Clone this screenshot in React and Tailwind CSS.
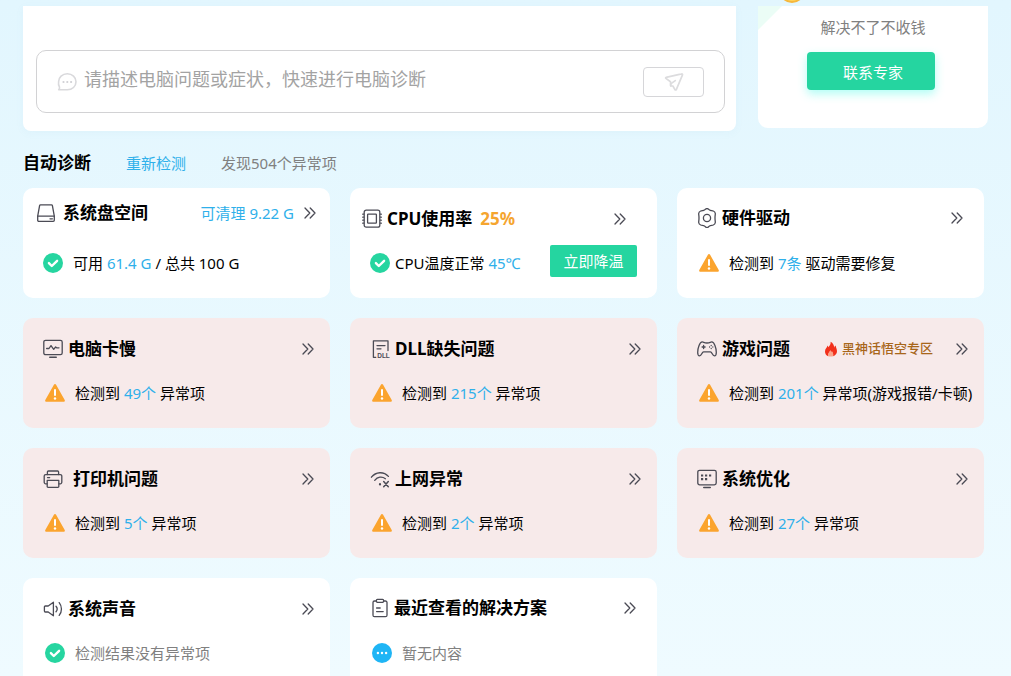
import React from "react";

const line = {
  fill: "none",
  stroke: "#4b4b55",
  strokeWidth: 1.3,
  strokeLinecap: "round",
  strokeLinejoin: "round",
  "aria-hidden": true,
};

const DiskIcon = () => (
  <svg {...line} width="18" height="18" viewBox="0 0 18 18">
    <path d="M3.6.8h10.8a1 1 0 0 1 1 .8l1.9 10.6v4a1.1 1.1 0 0 1-1.1 1.1H1.8a1.1 1.1 0 0 1-1.1-1.1v-4L2.6 1.6a1 1 0 0 1 1-.8z" />
    <path d="M.8 12.2h16.4M13 14.8h2.4" />
  </svg>
);

const CpuIcon = () => (
  <svg {...line} width="20" height="20" viewBox="0 0 20 20">
    <rect x="2.2" y="1.2" width="15.6" height="17" rx="2" />
    <rect x="5.6" y="5.2" width="8.8" height="9" rx=".6" />
    <path d="M.7 5.2h1M.7 8.2h1M.7 11.2h1M.7 14.2h1M18.4 5.2h1M18.4 8.2h1M18.4 11.2h1M18.4 14.2h1" />
  </svg>
);

const DriverIcon = () => (
  <svg {...line} width="20" height="20" viewBox="0 0 20 20">
    <path d="M8.800.9a2.200 2.200 0 0 1 2.400 0c.7.600 1.200 1.200 2.200 1.500s1.900.2 2.900.6c1.300.5 1.900 1.200 2 2.500.1 1-.3 1.800-.3 4.500s.4 3.500.3 4.500c-.1 1.300-.7 2-2 2.500-1 .4-1.900.3-2.900.6s-1.500.9-2.200 1.500a2.200 2.200 0 0 1-2.400 0c-.7-.6-1.200-1.200-2.200-1.500s-1.900-.2-2.900-.6c-1.300-.5-1.900-1.200-2-2.500-.1-1 .3-1.800.3-4.500s-.4-3.500-.3-4.500c.1-1.300.7-2 2-2.500 1-.4 1.900-.3 2.900-.6s1.500-.9 2.200-1.500z" />
    <circle cx="10" cy="10" r="3.600" />
  </svg>
);

const MonitorIcon = () => (
  <svg {...line} width="20" height="20" viewBox="0 0 20 20">
    <rect x=".8" y="1.300" width="18.400" height="14.400" rx="1.800" />
    <path d="M3.600 9.500H6l2-2.900L10.700 10.300l1.900-2.300 1 .8H16" />
    <path d="M6.800 18.300h6.400" strokeWidth="1.600" />
  </svg>
);

const DllIcon = () => (
  <svg {...line} width="18" height="20" viewBox="0 0 18 20">
    <path d="M3.800 18.300H1.400V1.800H16v9.800M5 6.600h8M5 9.800h4" />
    <text
      x="5.200"
      y="18.900"
      fontFamily="Liberation Sans, sans-serif"
      fontSize="6.500"
      fontWeight="700"
      fill="#4b4b55"
      stroke="none"
    >
      DLL
    </text>
  </svg>
);

const GamepadIcon = () => (
  <svg {...line} width="20" height="20" viewBox="0 0 20 20">
    <path d="M5.200 2.900c1.500 0 1.800 1.100 4.800 1.100s3.300-1.100 4.800-1.100c2.400 0 4.500 6.200 4.500 10.500 0 2-.7 3.400-1.900 3.400-2.200 0-2.100-4-4-4H6.600c-1.900 0-1.800 4-4 4-1.200 0-1.900-1.400-1.900-3.400C.7 9.100 2.800 2.900 5.200 2.900z" />
    <path d="M6.600 6.500v3M5.100 8h3M14.200 6.400v.1M14.200 9.500v.1M12.600 8v.1M15.800 8v.1" />
  </svg>
);

const PrinterIcon = () => (
  <svg {...line} width="20" height="20" viewBox="0 0 20 20">
    <path d="M4.400 5.600V3a1 1 0 0 1 1-1h9.200a1 1 0 0 1 1 1v2.600" />
    <path d="M4.200 14.800H2.700a1.500 1.500 0 0 1-1.500-1.500V7.100a1.500 1.500 0 0 1 1.500-1.500h14.600a1.500 1.500 0 0 1 1.500 1.500v6.200a1.500 1.500 0 0 1-1.500 1.500h-1.500" />
    <path d="M4.200 11.400h11.600v6.100a.8.800 0 0 1-.8.800H5a.8.800 0 0 1-.8-.8zM4.500 8.600h2.200" />
  </svg>
);

const WifiOffIcon = () => (
  <svg {...line} width="20" height="20" viewBox="0 0 20 20">
    <path d="M1.400 8.200c4.500-5.600 12.300-6 17-.8M4.700 11.300c2.800-3.500 7.300-4.200 10.700-1.600" />
    <path d="M10 15.200v.2" strokeWidth="2.200" />
    <path d="M13.700 12.500l4.600 5.200M18.300 12.500l-4.600 5.200" strokeWidth="1.500" />
  </svg>
);

const OptimizeIcon = () => (
  <svg {...line} width="20" height="20" viewBox="0 0 20 20">
    <rect x=".8" y="1.300" width="18.400" height="14.600" rx="1.800" />
    <path d="M4 6.500h2.200M8 6.500h2.200M12 6.500h2.200M4 10.200h2.200M8 10.200h2.200" strokeWidth="2.200" strokeLinecap="butt" />
    <path d="M6.800 18.500h6.400" strokeWidth="1.600" />
  </svg>
);

const SoundIcon = () => (
  <svg {...line} width="20" height="20" viewBox="0 0 20 20">
    <path d="M10.400 3.200v13.600L5.200 13H2.300a.9.900 0 0 1-.9-.9V7.900a.9.900 0 0 1 .9-.9h2.900z" />
    <path d="M13 7.200c1.400 1.600 1.400 4 0 5.600M16.200 3.600c3 3.700 3 9.100 0 12.800" />
  </svg>
);

const ClipboardIcon = () => (
  <svg {...line} width="18" height="20" viewBox="0 0 18 20">
    <path d="M5.300 3H3.500A1.500 1.500 0 0 0 2 4.500v12.700a1.500 1.500 0 0 0 1.500 1.500h11a1.500 1.500 0 0 0 1.500-1.500V4.500A1.500 1.500 0 0 0 14.500 3h-1.800" />
    <path d="M6.400 1.300h5.200a1 1 0 0 1 1 1v.8a1.300 1.300 0 0 1-1.300 1.300H6.700a1.300 1.300 0 0 1-1.300-1.300v-.8a1 1 0 0 1 1-1zM5.600 10h3.600M5.600 13.600h6.600" />
  </svg>
);

const ChevronsIcon = () => (
  <svg {...line} width="12" height="12" viewBox="0 0 12 12">
    <path d="M1 1l4.800 5L1 11M6.200 1L11 6l-4.800 5" />
  </svg>
);

const FlameIcon = () => (
  <svg width="14" height="16" viewBox="0 0 14 16" aria-hidden="true">
    <path d="M6.600.8c.4 2.400-.8 3.700-2.300 5.400-.2-.7-.4-1.200-.8-1.600C3.200 6.600 1 7.800 1 10.400c0 2.300 1.200 4 3.200 4.800-.9-2.400.9-3.700 2.300-5.900.5 1.500 1.200 1.900 1.600 1.300.9 1.400 1.500 3.100 1 4.600 2.300-.7 3.900-2.500 3.900-4.900 0-2.200-1.200-3.500-1.300-5.700-.9.500-1.300 1.100-1.500 2.100C10 4 9 2 6.600.8z" fill="#f2301b" />
    <path d="M4.200 15.200c-.9-2.400.9-3.700 2.300-5.900.5 1.500 1.200 1.900 1.600 1.300.9 1.400 1.500 3.100 1 4.600-1.500.4-3.400.4-4.900 0z" fill="#ff6a3a" opacity=".55" />
  </svg>
);

const OkIcon = () => (
  <svg className="shrink-0" width="20" height="20" viewBox="0 0 20 20" aria-hidden="true">
    <circle cx="10" cy="10" r="10" fill="#26d5a0" />
    <path d="M5.900 10.100l2.900 2.900 5.300-5.200" fill="none" stroke="#fff" strokeWidth="2.400" strokeLinecap="round" strokeLinejoin="round" />
  </svg>
);

const WarnIcon = () => (
  <svg className="shrink-0" width="20" height="20" viewBox="0 0 20 20" aria-hidden="true">
    <path d="M8.900 1.700a1.300 1.300 0 0 1 2.200 0l8.600 15.200a1.200 1.200 0 0 1-1.100 1.800H1.400a1.200 1.200 0 0 1-1.100-1.800z" fill="#fba42e" />
    <path d="M10 7v5" stroke="#fff" strokeWidth="2" strokeLinecap="round" />
    <circle cx="10" cy="15.500" r="1.200" fill="#fff" />
  </svg>
);

const MoreIcon = () => (
  <svg className="shrink-0" width="20" height="20" viewBox="0 0 20 20" aria-hidden="true">
    <circle cx="10" cy="10" r="10" fill="#1fb5f5" />
    <g fill="#fff">
      <circle cx="5.900" cy="10" r="1.200" />
      <circle cx="10" cy="10" r="1.200" />
      <circle cx="14.100" cy="10" r="1.200" />
    </g>
  </svg>
);

const ChatIcon = () => (
  <svg width="20" height="20" viewBox="0 0 20 20" fill="none" stroke="#d9d9dc" strokeWidth="1.600" strokeLinejoin="round" aria-hidden="true">
    <path d="M10.300 1.800c5 0 8.700 3.500 8.700 8s-3.700 8-8.700 8H1.700c.8-.8 1-1.600.8-2.600A7.800 7.800 0 0 1 1.600 9.800c0-4.500 3.700-8 8.700-8z" />
    <g fill="#d0d0d4" stroke="none">
      <circle cx="6.500" cy="10" r="1.100" />
      <circle cx="10.300" cy="10" r="1.100" />
      <circle cx="14.100" cy="10" r="1.100" />
    </g>
  </svg>
);

const SendIcon = () => (
  <svg width="20" height="20" viewBox="0 0 20 20" fill="none" stroke="#dcdcde" strokeWidth="1.700" strokeLinecap="round" strokeLinejoin="round" aria-hidden="true">
    <path d="M17.600 1.900L2.100 5.300a.6.600 0 0 0-.2 1.100l4.600 3.400.2 4 2.200.2 2 3.600a.8.800 0 0 0 1.400 0l6.200-14.800a.7.700 0 0 0-.9-.9z" />
    <path d="M6.700 13.800v-1.900l4.600-3.300" />
  </svg>
);

const Hl = ({ children }) => <span className="text-[#2fb0ea]">{children}</span>;

function Card({ pink, headClass = "pl-5 pr-4 pt-[19px]", bodyClass = "pl-[22px] gap-[10px]", gap = "gap-[5px]", icon, title, extra, status, children, action }) {
  return (
    <article className={`flex h-[110px] min-w-0 flex-col rounded-[10px] pb-[17px] ${pink ? "bg-[#f7eaea]" : "bg-white"}`}>
      <header className={`flex items-center ${headClass}`}>
        <div className={`flex h-6 items-center ${gap}`}>
          {icon}
          <h3 className="whitespace-nowrap text-[17px] font-bold leading-6 text-black">{title}</h3>
        </div>
        <div className="flex grow items-center">{extra}</div>
        <button type="button" aria-label={`${title} 详情`} className="shrink-0">
          <ChevronsIcon />
        </button>
      </header>
      <div className={`mt-auto flex h-9 items-center ${bodyClass}`}>
        {status}
        <p className="whitespace-nowrap text-[15px] leading-6">{children}</p>
        {action}
      </div>
    </article>
  );
}

export default function App() {
  return (
    <div className="flex h-screen flex-col overflow-hidden bg-linear-to-b from-[#e2f6fe] to-[#effbff] px-[23px] pt-[6px] font-['Noto_Sans','Noto_Sans_CJK_SC',sans-serif] text-black">
      <div className="flex shrink-0 items-start gap-[22px]">
        <section className="min-w-0 grow rounded-b-lg bg-white px-[13px] pb-[18px] pt-11 shadow-[0_2px_8px_rgba(90,160,200,0.05)]">
          <form className="mr-[-2px] flex h-[63px] items-center rounded-[10px] border border-[#d2d2d4] pl-5 pr-5" onSubmit={(e) => e.preventDefault()}>
            <label htmlFor="question" aria-label="问题描述">
              <ChatIcon />
            </label>
            <input
              id="question"
              type="text"
              placeholder="请描述电脑问题或症状，快速进行电脑诊断"
              className="ml-[7px] mr-4 h-10 min-w-0 grow bg-transparent pb-[6px] text-[18px] outline-none placeholder:text-[#a3a3a3]"
            />
            <button type="submit" aria-label="发送" className="flex h-[30px] w-[61px] items-center justify-center rounded border border-[#d6d6d9]">
              <SendIcon />
            </button>
          </form>
        </section>

        <aside className="relative flex w-[230px] shrink-0 flex-col items-center rounded-b-[10px] bg-white pb-[38px] pt-[9px]">
          <svg className="absolute left-0 top-0" width="24" height="24" viewBox="0 0 24 24" aria-hidden="true">
            <path d="M0 0h24L0 24z" fill="#ebfdf6" />
          </svg>
          <svg className="absolute -top-[30px] left-[21px]" width="26" height="28" viewBox="0 0 26 28" aria-hidden="true">
            <circle cx="13" cy="14" r="13" fill="#f6b73c" />
            <circle cx="13" cy="14" r="11" fill="#ffd35a" />
          </svg>
          <p className="text-[15px] leading-6 text-[#808080]">解决不了不收钱</p>
          <button type="button" className="mr-1 mt-[13px] h-[38px] w-32 rounded bg-[#25d5a0] pl-1 pt-[2px] text-[15px] text-white shadow-[0_4px_10px_rgba(60,250,230,0.4)]">
            联系专家
          </button>
        </aside>
      </div>

      <div className="mb-[13px] mt-5 flex h-6 shrink-0 items-center">
        <h2 className="text-[17px] font-bold leading-6">自动诊断</h2>
        <a href="#rescan" className="ml-[35px] text-[15px] text-[#2fb0ea]">重新检测</a>
        <span className="ml-[35px] text-[15px] text-[#808080]">发现504个异常项</span>
      </div>

      <main className="mr-1 grid shrink-0 grid-cols-3 gap-5">
        <Card
          icon={<DiskIcon />}
          title="系统盘空间"
          headClass="pl-[14px] pr-[14px] pt-[13px]"
          gap="gap-2"
          bodyClass="pl-5 gap-[10px]"
          extra={<a href="#clean" className="ml-auto mr-[10px] whitespace-nowrap text-[15px] text-[#2fb0ea]">可清理 9.22 G</a>}
          status={<OkIcon />}
        >
          可用 <Hl>61.4 G</Hl> / 总共 100 G
        </Card>

        <Card
          icon={<CpuIcon />}
          title="CPU使用率"
          headClass="pl-3 pr-[31px] pt-[18px]"
          bodyClass="pl-5 pr-5 gap-[5px]"
          extra={<span className="ml-2 text-[17px] font-bold text-[#f5a52f]">25%</span>}
          status={<OkIcon />}
          action={
            <button type="button" className="ml-auto h-8 w-[87px] shrink-0 self-start rounded-xs bg-[#25d5a0] text-[15px] text-white">
              立即降温
            </button>
          }
        >
          CPU温度正常 <Hl>45℃</Hl>
        </Card>

        <Card icon={<DriverIcon />} title="硬件驱动" headClass="pl-5 pr-[21px] pt-[18px]" status={<WarnIcon />}>
          检测到 <Hl>7条</Hl> 驱动需要修复
        </Card>

        <Card pink icon={<MonitorIcon />} title="电脑卡慢" status={<WarnIcon />}>
          检测到 <Hl>49个</Hl> 异常项
        </Card>

        <Card pink icon={<DllIcon />} title="DLL缺失问题" headClass="pl-[22px] pr-4 pt-[19px]" status={<WarnIcon />}>
          检测到 <Hl>215个</Hl> 异常项
        </Card>

        <Card
          pink
          icon={<GamepadIcon />}
          title="游戏问题"
          status={<WarnIcon />}
          extra={
            <a href="#wukong" className="ml-auto mr-[23px] flex items-center gap-1 whitespace-nowrap text-[13px] font-medium text-[#a8661a]">
              <FlameIcon />
              黑神话悟空专区
            </a>
          }
        >
          检测到 <Hl>201个</Hl> 异常项(游戏报错/卡顿)
        </Card>

        <Card pink icon={<PrinterIcon />} title="打印机问题" gap="gap-[10px]" status={<WarnIcon />}>
          检测到 <Hl>5个</Hl> 异常项
        </Card>

        <Card pink icon={<WifiOffIcon />} title="上网异常" status={<WarnIcon />}>
          检测到 <Hl>2个</Hl> 异常项
        </Card>

        <Card pink icon={<OptimizeIcon />} title="系统优化" status={<WarnIcon />}>
          检测到 <Hl>27个</Hl> 异常项
        </Card>

        <Card icon={<SoundIcon />} title="系统声音" status={<OkIcon />}>
          <span className="text-[#808080]">检测结果没有异常项</span>
        </Card>

        <Card icon={<ClipboardIcon />} title="最近查看的解决方案" headClass="pl-[21px] pr-[21px] pt-[18px]" status={<MoreIcon />}>
          <span className="text-[#808080]">暂无内容</span>
        </Card>
      </main>
    </div>
  );
}
